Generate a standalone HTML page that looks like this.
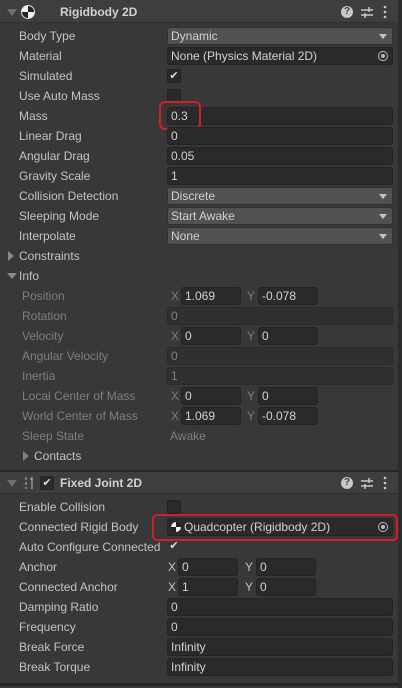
<!DOCTYPE html>
<html><head><meta charset="utf-8"><style>
*{margin:0;padding:0;box-sizing:border-box}
body{width:402px;height:686px;background:#383838;font-family:"Liberation Sans",sans-serif;font-size:12px;color:#c4c4c4;position:relative;overflow:hidden}
body>*{margin-top:1px}
.a{position:absolute}
.hdr{position:absolute;left:0;width:398px;height:22px;background:#3e3e3e;border-bottom:1px solid #303030}
.ht{position:absolute;left:60px;top:4px;font-weight:bold;font-size:12px;color:#d2d2d2}
.lb{position:absolute;left:19px;height:20px;line-height:20px;white-space:nowrap}
.g{color:#7f7f7f;left:22px}
.f{position:absolute;left:167px;width:226px;height:18px;background:#2a2a2a;border:1px solid #232323;border-radius:3px;line-height:16px;padding-left:3px;color:#d2d2d2}
.dd{background:#515151;border-color:#303030}
.dd:after{content:"";position:absolute;right:5px;top:6px;border-left:4px solid transparent;border-right:4px solid transparent;border-top:5px solid #c4c4c4}
.fg{color:#7f7f7f;background:#303030;border-color:#2a2a2a}
.cb{position:absolute;left:167px;width:14px;height:14px;background:#2a2a2a;border:1px solid #222;border-radius:2px;color:#ddd;font-size:11px;line-height:12px;text-align:center}
.x{position:absolute;height:18px;line-height:18px}
.xb{position:absolute;width:60px;height:18px;background:#2a2a2a;border:1px solid #232323;border-radius:3px;line-height:16px;padding-left:3px;color:#d2d2d2}
.tri{position:absolute;width:0;height:0}
.red{position:absolute;border:2px solid #d0202a;border-radius:6px}
</style></head><body>
<div class="a" style="left:398px;top:-1px;width:4px;height:688px;background:#2c2c2c"></div>

<div class="hdr" style="top:-1px;height:23px"></div>
<div class="tri" style="left:7px;top:8px;border-left:5px solid transparent;border-right:5px solid transparent;border-top:7px solid #707070"></div>
<div class="a" style="left:21px;top:4px;width:14px;height:14px;border-radius:50%;background:conic-gradient(#222 0 90deg,#eee 90deg 180deg,#222 180deg 270deg,#eee 270deg);border:1px solid #ddd"></div>
<div class="ht">Rigidbody 2D</div>
<div class="a" style="left:341px;top:5px;width:12px;height:12px;border-radius:50%;background:#c8c8c8;color:#3e3e3e;font-size:10px;font-weight:bold;text-align:center;line-height:12px">?</div>
<svg class="a" style="left:360px;top:4px" width="14" height="14"><path d="M1 5H13M1 10H13M9 2V7M5 8V13" stroke="#c8c8c8" stroke-width="1.5"/></svg>
<svg class="a" style="left:383px;top:4px" width="4" height="14"><circle cx="2" cy="2" r="1.3" fill="#c8c8c8"/><circle cx="2" cy="7" r="1.3" fill="#c8c8c8"/><circle cx="2" cy="12" r="1.3" fill="#c8c8c8"/></svg>

<div class="lb" style="top:25px">Body Type</div><div class="f dd" style="top:26px">Dynamic</div>
<div class="lb" style="top:45px">Material</div><div class="f" style="top:46px">None (Physics Material 2D)<span class="a" style="right:4px;top:3px;width:10px;height:10px;border:1.5px solid #bbb;border-radius:50%"></span><span class="a" style="right:7px;top:6px;width:4px;height:4px;background:#bbb;border-radius:50%"></span></div>
<div class="lb" style="top:65px">Simulated</div><div class="cb" style="top:68px">✔</div>
<div class="lb" style="top:85px">Use Auto Mass</div><div class="cb" style="top:88px"></div>
<div class="lb" style="top:105px">Mass</div><div class="f" style="top:106px">0.3</div>
<div class="red" style="left:159px;top:100px;width:42px;height:29px"></div>
<div class="lb" style="top:125px">Linear Drag</div><div class="f" style="top:126px">0</div>
<div class="lb" style="top:145px">Angular Drag</div><div class="f" style="top:146px">0.05</div>
<div class="lb" style="top:165px">Gravity Scale</div><div class="f" style="top:166px">1</div>
<div class="lb" style="top:185px">Collision Detection</div><div class="f dd" style="top:186px">Discrete</div>
<div class="lb" style="top:205px">Sleeping Mode</div><div class="f dd" style="top:206px">Start Awake</div>
<div class="lb" style="top:225px">Interpolate</div><div class="f dd" style="top:226px">None</div>
<div class="tri" style="left:8px;top:250px;border-top:5px solid transparent;border-bottom:5px solid transparent;border-left:6px solid #8a8a8a"></div>
<div class="lb" style="top:245px">Constraints</div>
<div class="tri" style="left:7px;top:272px;border-left:5px solid transparent;border-right:5px solid transparent;border-top:6px solid #8a8a8a"></div>
<div class="lb" style="top:265px">Info</div>

<div class="lb g" style="top:285px">Position</div>
<div class="x" style="left:171px;top:286px;color:#7f7f7f">X</div><div class="xb fg" style="left:181px;top:286px">1.069</div>
<div class="x" style="left:247px;top:286px;color:#7f7f7f">Y</div><div class="xb fg" style="left:258px;top:286px">-0.078</div>
<div class="lb g" style="top:305px">Rotation</div><div class="f fg" style="top:306px">0</div>
<div class="lb g" style="top:325px">Velocity</div>
<div class="x" style="left:171px;top:326px;color:#7f7f7f">X</div><div class="xb fg" style="left:181px;top:326px">0</div>
<div class="x" style="left:247px;top:326px;color:#7f7f7f">Y</div><div class="xb fg" style="left:258px;top:326px">0</div>
<div class="lb g" style="top:345px">Angular Velocity</div><div class="f fg" style="top:346px">0</div>
<div class="lb g" style="top:365px">Inertia</div><div class="f fg" style="top:366px">1</div>
<div class="lb g" style="top:385px">Local Center of Mass</div>
<div class="x" style="left:171px;top:386px;color:#7f7f7f">X</div><div class="xb fg" style="left:181px;top:386px">0</div>
<div class="x" style="left:247px;top:386px;color:#7f7f7f">Y</div><div class="xb fg" style="left:258px;top:386px">0</div>
<div class="lb g" style="top:405px">World Center of Mass</div>
<div class="x" style="left:171px;top:406px;color:#7f7f7f">X</div><div class="xb fg" style="left:181px;top:406px">1.069</div>
<div class="x" style="left:247px;top:406px;color:#7f7f7f">Y</div><div class="xb fg" style="left:258px;top:406px">-0.078</div>
<div class="lb g" style="top:425px">Sleep State</div><div class="x" style="left:170px;top:426px;color:#7f7f7f">Awake</div>
<div class="tri" style="left:23px;top:450px;border-top:5px solid transparent;border-bottom:5px solid transparent;border-left:6px solid #7f7f7f"></div>
<div class="lb" style="left:34px;top:445px">Contacts</div>

<div class="a" style="left:0;top:469px;width:398px;height:2px;background:#262626"></div>
<div class="hdr" style="top:471px"></div>
<div class="tri" style="left:7px;top:479px;border-left:5px solid transparent;border-right:5px solid transparent;border-top:7px solid #707070"></div>
<svg class="a" style="left:24px;top:475px" width="10" height="14"><path d="M2 1V4M2 6V9M2 11V13M8 1V13M6 3H8" stroke="#aaa" stroke-width="1.2"/></svg>
<div class="cb" style="left:40px;top:475px;background:#2a2a2a">✔</div>
<div class="ht" style="top:475px">Fixed Joint 2D</div>
<div class="a" style="left:341px;top:476px;width:12px;height:12px;border-radius:50%;background:#c8c8c8;color:#3e3e3e;font-size:10px;font-weight:bold;text-align:center;line-height:12px">?</div>
<svg class="a" style="left:360px;top:475px" width="14" height="14"><path d="M1 5H13M1 10H13M9 2V7M5 8V13" stroke="#c8c8c8" stroke-width="1.5"/></svg>
<svg class="a" style="left:383px;top:475px" width="4" height="14"><circle cx="2" cy="2" r="1.3" fill="#c8c8c8"/><circle cx="2" cy="7" r="1.3" fill="#c8c8c8"/><circle cx="2" cy="12" r="1.3" fill="#c8c8c8"/></svg>

<div class="lb" style="top:496px">Enable Collision</div><div class="cb" style="top:499px"></div>
<div class="lb" style="top:516px">Connected Rigid Body</div>
<div class="f" style="top:517px;padding-left:16px">Quadcopter (Rigidbody 2D)<span class="a" style="left:3px;top:3px;width:10px;height:10px;border-radius:50%;background:conic-gradient(#222 0 90deg,#eee 90deg 180deg,#222 180deg 270deg,#eee 270deg)"></span><span class="a" style="right:4px;top:3px;width:10px;height:10px;border:1.5px solid #bbb;border-radius:50%"></span><span class="a" style="right:7px;top:6px;width:4px;height:4px;background:#bbb;border-radius:50%"></span></div>
<div class="red" style="left:152px;top:513px;width:246px;height:27px;border-radius:5px"></div>
<div class="lb" style="top:536px;width:147px;overflow:hidden">Auto Configure Connected</div><div class="cb" style="top:539px;background:none;border:none">✔</div>
<div class="lb" style="top:556px">Anchor</div>
<div class="x" style="left:168px;top:557px">X</div><div class="xb" style="left:178px;top:557px">0</div>
<div class="x" style="left:245px;top:557px">Y</div><div class="xb" style="left:256px;top:557px">0</div>
<div class="lb" style="top:576px">Connected Anchor</div>
<div class="x" style="left:168px;top:577px">X</div><div class="xb" style="left:178px;top:577px">1</div>
<div class="x" style="left:245px;top:577px">Y</div><div class="xb" style="left:256px;top:577px">0</div>
<div class="lb" style="top:596px">Damping Ratio</div><div class="f" style="top:597px">0</div>
<div class="lb" style="top:616px">Frequency</div><div class="f" style="top:617px">0</div>
<div class="lb" style="top:636px">Break Force</div><div class="f" style="top:637px">Infinity</div>
<div class="lb" style="top:656px">Break Torque</div><div class="f" style="top:657px">Infinity</div>
<div class="a" style="left:0;top:682px;width:398px;height:3px;background:#262626"></div>
</body></html>
